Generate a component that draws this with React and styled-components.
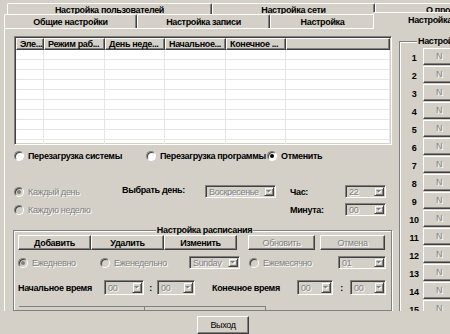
import React from 'react';
import styled, { createGlobalStyle, css } from 'styled-components';

const FACE = '#d4d0c8';
const SHADOW = '#808080';
const DARK = '#404040';

const Global = createGlobalStyle`
  html, body { margin: 0; padding: 0; background: ${FACE}; overflow: hidden; }
  body { font-family: "Liberation Sans", Arial, sans-serif; font-size: 9px; letter-spacing: -0.35px; color: #000; }
  * { box-sizing: border-box; }
`;

const Window = styled.div`
  width: 450px;
  height: 334px;
  overflow: hidden;
  background: ${FACE};
  display: flex;
  flex-direction: column;
`;

const TabStrip = styled.div`
  display: flex;
  flex-direction: column;
  padding-top: 3px;
`;

const TabRow = styled.div`
  display: flex;
  height: ${p => p.$h}px;
  padding-left: ${p => p.$indent}px;
  position: relative;
  z-index: ${p => p.$z || 0};
`;

const Tab = styled.div`
  flex: 0 0 ${p => p.$w}px;
  border-top: 1px solid #fff;
  border-left: 1px solid #fff;
  border-right: 1px solid ${DARK};
  box-shadow: inset -1px 0 ${SHADOW};
  border-radius: 2px 2px 0 0;
  background: ${FACE};
  display: flex;
  align-items: center;
  justify-content: ${p => (p.$left ? 'flex-start' : 'center')};
  padding-left: ${p => p.$pl || 0}px;
  padding-top: 1px;
  font-weight: bold;
  white-space: nowrap;
  overflow: hidden;
  ${p => p.$active && css`
    margin-top: -2px;
    height: calc(100% + 3px);
    margin-left: -2px;
    position: relative;
    z-index: 2;
    padding-top: 0;
    padding-bottom: 3px;
  `}
`;

const Page = styled.div`
  height: 284px;
  margin-left: 4px;
  border-top: 1px solid #fff;
  border-left: 1px solid #fff;
  display: flex;
  overflow: hidden;
`;

const LeftPane = styled.div`
  flex: 0 0 394px;
  padding: 7px 0 0 9px;
  display: flex;
  flex-direction: column;
`;

const ListView = styled.div`
  width: 378px;
  height: 114px;
  background: #fff;
  border: 1px solid;
  border-color: ${SHADOW} #fff #fff ${SHADOW};
  box-shadow: inset 1px 1px ${DARK}, inset -1px -1px ${FACE};
  padding: 1px;
  overflow: hidden;
`;

const cols = '28px 61px 60px 61px 60px 1fr';

const HeaderRow = styled.div`
  display: grid;
  grid-template-columns: ${cols};
  height: 12px;
`;

const HeaderCell = styled.div`
  background: ${FACE};
  border-top: 1px solid #fff;
  border-left: 1px solid #fff;
  border-right: 1px solid ${DARK};
  border-bottom: 1px solid ${DARK};
  box-shadow: inset -1px -1px ${SHADOW};
  font-weight: bold;
  padding-left: 3px;
  line-height: 10px;
  white-space: nowrap;
  overflow: hidden;
`;

const BodyRow = styled.div`
  display: grid;
  grid-template-columns: ${cols};
  height: 10px;
  border-bottom: 1px solid #e6e6e6;
`;

const BodyCell = styled.div`
  border-right: 1px solid #e6e6e6;
`;

const OptionRow = styled.div`
  display: flex;
  align-items: center;
  height: 12px;
  margin-top: ${p => p.$mt || 0}px;
`;

const Option = styled.label`
  flex: 0 0 ${p => p.$w ? p.$w + 'px' : 'auto'};
  display: flex;
  align-items: center;
  gap: 4px;
  font-weight: ${p => (p.$disabled ? 'normal' : 'bold')};
  color: ${p => (p.$disabled ? SHADOW : '#000')};
  text-shadow: ${p => (p.$disabled ? '1px 1px #fff' : 'none')};
  white-space: nowrap;
`;

const RadioCircle = styled.span`
  width: 10px;
  height: 10px;
  flex: 0 0 10px;
  border-radius: 50%;
  border: 1px solid;
  border-color: ${SHADOW} #fff #fff ${SHADOW};
  box-shadow: inset 1px 1px ${DARK};
  background: ${p => (p.$disabled ? FACE : '#fff')};
  display: flex;
  align-items: center;
  justify-content: center;
  text-shadow: none;
  &::after {
    content: '';
    width: 4px;
    height: 4px;
    border-radius: 50%;
    background: ${p => (p.$checked ? (p.$disabled ? SHADOW : '#000') : 'transparent')};
  }
`;

const Radio = ({ label, checked, disabled, w }) => (
  <Option $w={w} $disabled={disabled}>
    <RadioCircle $checked={checked} $disabled={disabled} />
    <span>{label}</span>
  </Option>
);

const SchedGrid = styled.div`
  display: grid;
  grid-template-columns: 108px 83px 71px 14px 55px 41px;
  grid-auto-rows: 13px;
  row-gap: 5px;
  align-items: center;
  margin-top: 23px;
`;

const Label = styled.span`
  font-weight: bold;
  white-space: nowrap;
  align-self: ${p => p.$self || 'center'};
`;

const ComboBox = styled.div`
  width: ${p => p.$w}px;
  height: ${p => p.$h || 13}px;
  border: 1px solid;
  border-color: ${SHADOW} #fff #fff ${SHADOW};
  box-shadow: inset 1px 1px ${DARK}, inset -1px -1px ${FACE};
  background: ${FACE};
  display: flex;
  align-items: stretch;
  padding: 1px;
`;

const ComboText = styled.span`
  flex: 1;
  color: ${SHADOW};
  text-shadow: 1px 1px #fff;
  padding-left: 2px;
  display: flex;
  align-items: center;
  white-space: nowrap;
  overflow: hidden;
`;

const ComboButton = styled.span`
  flex: 0 0 10px;
  border-top: 1px solid ${FACE};
  border-left: 1px solid ${FACE};
  border-right: 1px solid ${DARK};
  border-bottom: 1px solid ${DARK};
  box-shadow: inset 1px 1px #fff, inset -1px -1px ${SHADOW};
  display: flex;
  align-items: center;
  justify-content: center;
`;

const Combo = ({ w, h, value }) => (
  <ComboBox $w={w} $h={h}>
    <ComboText>{value}</ComboText>
    <ComboButton>
      <svg width="6" height="4" viewBox="0 0 6 4">
        <path d="M1 1 H6 L3.5 3.5 Z" fill="#fff" />
        <path d="M0 0 H5 L2.5 2.5 Z" fill={SHADOW} />
      </svg>
    </ComboButton>
  </ComboBox>
);

const GroupBox = styled.fieldset`
  margin: 0;
  padding: 0 0 0 ${p => p.$pl || 4}px;
  border: 1px solid ${SHADOW};
  box-shadow: inset 1px 1px #fff, 1px 1px #fff;
  min-width: 0;
`;

const Legend = styled.legend`
  font-weight: bold;
  padding: 0 1px;
  line-height: 10px;
  background: ${FACE};
  margin: ${p => (p.$center ? '0 auto' : '0 0 0 12px')};
  white-space: nowrap;
`;

const ScheduleGroup = styled(GroupBox)`
  width: 379px;
  height: 90px;
  margin-left: -1px;
  margin-top: 9px;
`;

const ButtonRow = styled.div`
  display: flex;
  margin-top: 0px;
`;

const Button = styled.button`
  font: inherit;
  letter-spacing: inherit;
  width: ${p => p.$w}px;
  height: ${p => p.$h || 15}px;
  margin-left: ${p => p.$ml || 0}px;
  padding: 0;
  background: ${FACE};
  border-top: 1px solid #fff;
  border-left: 1px solid #fff;
  border-right: 1px solid ${DARK};
  border-bottom: 1px solid ${DARK};
  box-shadow: inset -1px -1px ${SHADOW};
  font-weight: ${p => (p.$disabled || p.$regular ? 'normal' : 'bold')};
  color: ${p => (p.$disabled ? SHADOW : '#000')};
  text-shadow: ${p => (p.$disabled ? '1px 1px #fff' : 'none')};
  display: flex;
  align-items: center;
  justify-content: center;
  white-space: nowrap;
`;

const FreqRow = styled.div`
  display: grid;
  grid-template-columns: 82px 89px 60px 89px 48px;
  align-items: center;
  height: 13px;
  margin-top: 6px;
`;

const TimeRow = styled.div`
  display: grid;
  grid-template-columns: 86px 40px 13px 38px 17px 85px 36px 17px 36px;
  align-items: center;
  height: 15px;
  margin-top: 11px;
`;

const Colon = styled.span`
  font-weight: bold;
  text-align: center;
`;

const Clipped = styled.div`
  display: flex;
  margin-top: 11px;
  margin-left: 1px;
  height: 4px;
`;

const ClippedEdge = styled.div`
  width: ${p => p.$w}px;
  border-top: 1px solid ${SHADOW};
  border-right: 1px solid ${SHADOW};
`;

const RightGroup = styled(GroupBox)`
  flex: 0 0 auto;
  width: 80px;
  margin-top: 7px;
  margin-left: 0px;
  height: 300px;
  padding: 0 0 0 5px;
`;

const SlotList = styled.div`
  display: flex;
  flex-direction: column;
  margin-top: 1px;
`;

const Slot = styled.div`
  display: flex;
  align-items: center;
  height: 18px;
`;

const SlotNum = styled.span`
  flex: 0 0 18px;
  font-weight: bold;
  text-align: center;
  padding-top: 4px;
`;

const SlotButton = styled(Button)`
  font-weight: normal;
`;

const Footer = styled.div`
  display: flex;
  padding: 5px 0 0 197px;
`;

const rows = Array.from({ length: 10 });

export default function App() {
  return (
    <Window>
      <Global />
      <TabStrip>
        <TabRow $h={11} $indent={7}>
          <Tab $w={205}>Настройка пользователей</Tab>
          <Tab $w={163}>Настройка сети</Tab>
          <Tab $w={120} $left $pl={50}>О программе</Tab>
        </TabRow>
        <TabRow $h={14} $indent={4} $z={2}>
          <Tab $w={133}>Общие настройки</Tab>
          <Tab $w={133}>Настройка записи</Tab>
          <Tab $w={105}>Настройка</Tab>
          <Tab $w={120} $active $left $pl={34}>Настройка времени</Tab>
        </TabRow>
      </TabStrip>
      <Page>
        <LeftPane>
          <ListView>
            <HeaderRow>
              <HeaderCell>Эле...</HeaderCell>
              <HeaderCell>Режим раб...</HeaderCell>
              <HeaderCell>День неде...</HeaderCell>
              <HeaderCell>Начальное...</HeaderCell>
              <HeaderCell>Конечное ...</HeaderCell>
              <HeaderCell />
            </HeaderRow>
            {rows.map((_, i) => (
              <BodyRow key={i}>
                <BodyCell /><BodyCell /><BodyCell /><BodyCell /><BodyCell /><BodyCell />
              </BodyRow>
            ))}
          </ListView>
          <OptionRow $mt={6}>
            <Radio w={132} label="Перезагрузка системы" />
            <Radio w={121} label="Перезагрузка программы" />
            <Radio label="Отменить" checked />
          </OptionRow>
          <SchedGrid>
            <Radio label="Каждый день" checked disabled />
            <Label $self="start">Выбрать день:</Label>
            <Combo w={71} value="Воскресенье" />
            <span />
            <Label>Час:</Label>
            <Combo w={41} value="22" />
            <Radio label="Каждую неделю" disabled />
            <span /><span /><span />
            <Label>Минута:</Label>
            <Combo w={41} value="00" />
          </SchedGrid>
          <ScheduleGroup>
            <Legend $center>Настройка расписания</Legend>
            <ButtonRow>
              <Button $w={73}>Добавить</Button>
              <Button $w={73}>Удалить</Button>
              <Button $w={73}>Изменить</Button>
              <Button $w={67} $ml={11} $disabled>Обновить</Button>
              <Button $w={65} $ml={5} $disabled>Отмена</Button>
            </ButtonRow>
            <FreqRow>
              <Radio label="Ежедневно" checked disabled />
              <Radio label="Еженедельно" disabled />
              <Combo w={51} value="Sunday" />
              <Radio label="Ежемесячно" disabled />
              <Combo w={48} value="01" />
            </FreqRow>
            <TimeRow>
              <Label>Начальное время</Label>
              <Combo w={40} h={15} value="00" />
              <Colon>:</Colon>
              <Combo w={38} h={15} value="00" />
              <span />
              <Label>Конечное время</Label>
              <Combo w={36} h={15} value="00" />
              <Colon>:</Colon>
              <Combo w={36} h={15} value="00" />
            </TimeRow>
            <Clipped>
              <ClippedEdge $w={126} />
              <ClippedEdge $w={121} />
            </Clipped>
          </ScheduleGroup>
        </LeftPane>
        <RightGroup>
          <Legend>Настройка</Legend>
          <SlotList>
            {Array.from({ length: 15 }).map((_, i) => (
              <Slot key={i}>
                <SlotNum>{i + 1}</SlotNum>
                <SlotButton $w={32} $h={17} $disabled>N</SlotButton>
              </Slot>
            ))}
          </SlotList>
        </RightGroup>
      </Page>
      <Footer>
        <Button $w={52} $h={18} $regular>Выход</Button>
      </Footer>
    </Window>
  );
}
